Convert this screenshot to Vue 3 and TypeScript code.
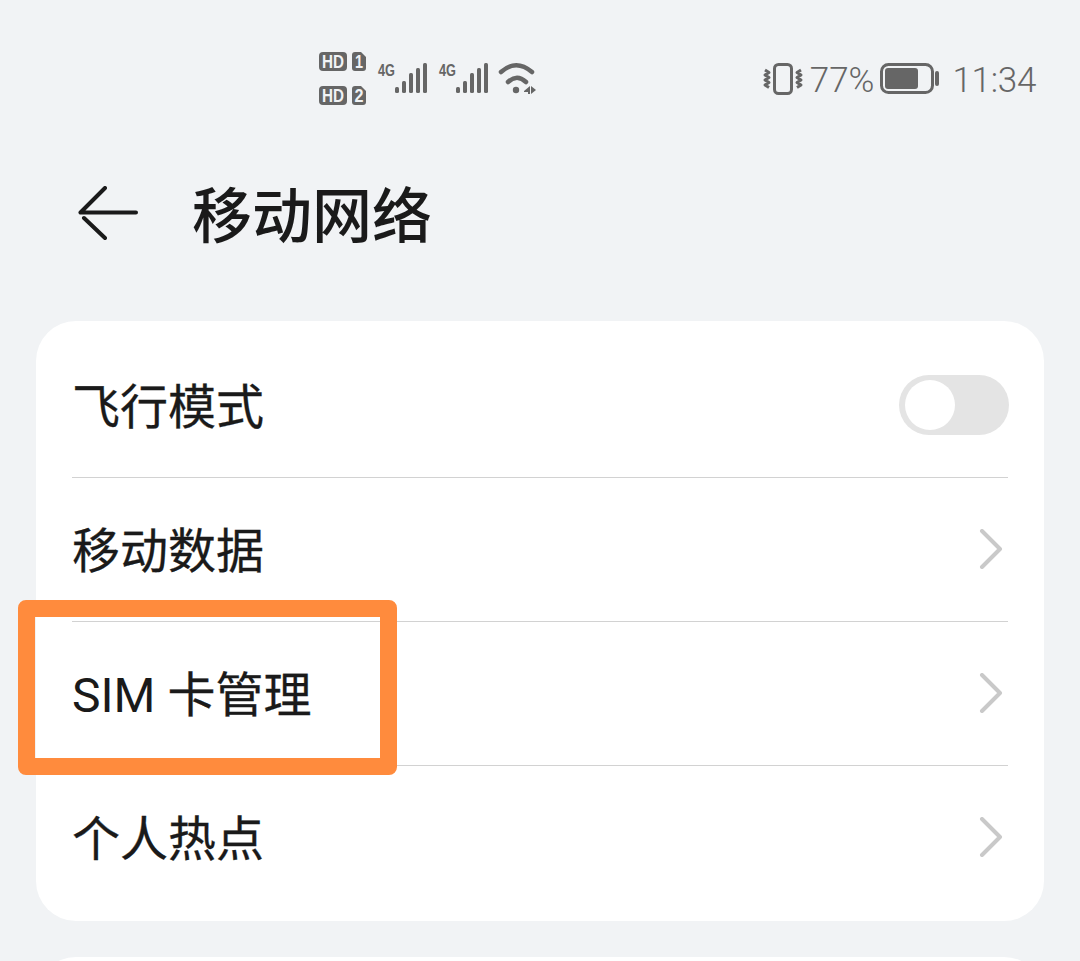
<script setup lang="ts">
const rows: { label: string; latin?: string; toggle?: boolean }[] = [
  { label: '飞行模式', toggle: true },
  { label: '移动数据' },
  { latin: 'SIM ', label: '卡管理' },
  { label: '个人热点' },
]
const bars = [
  { x: 0, y: 24, h: 6 },
  { x: 7, y: 18, h: 12 },
  { x: 14, y: 10, h: 20 },
  { x: 21, y: 5, h: 25 },
  { x: 28, y: 0, h: 30 },
]
</script>

<template>
  <div class="page">
    <div class="status">
      <svg class="sim" width="48" height="54" viewBox="0 0 48 54">
        <rect x="0" y="0" width="28" height="19" rx="4" fill="#666" />
        <text x="14" y="16" class="badge" text-anchor="middle" textLength="22" lengthAdjust="spacingAndGlyphs">HD</text>
        <path d="M33 3a3 3 0 0 1 3-3h6l5 5v11a3 3 0 0 1-3 3h-8a3 3 0 0 1-3-3z" fill="#666" />
        <text x="40" y="16" class="badge" text-anchor="middle" textLength="8" lengthAdjust="spacingAndGlyphs">1</text>
        <rect x="0" y="34" width="28" height="19" rx="4" fill="#666" />
        <text x="14" y="50" class="badge" text-anchor="middle" textLength="22" lengthAdjust="spacingAndGlyphs">HD</text>
        <path d="M33 37a3 3 0 0 1 3-3h6l5 5v11a3 3 0 0 1-3 3h-8a3 3 0 0 1-3-3z" fill="#666" />
        <text x="40" y="50" class="badge" text-anchor="middle" textLength="9" lengthAdjust="spacingAndGlyphs">2</text>
      </svg>
      <svg v-for="n in 2" :key="n" class="signal" width="50" height="32" viewBox="0 0 50 32">
        <text x="0" y="13" class="net" textLength="17" lengthAdjust="spacingAndGlyphs">4G</text>
        <rect v-for="b in bars" :key="b.x" :x="17 + b.x" :y="b.y" width="4" :height="b.h" rx="1.5" fill="#666" />
      </svg>
      <svg class="wifi" width="38" height="34" viewBox="0 0 38 34">
        <path d="M3 10Q18 -3.500 34 10" fill="none" stroke="#666" stroke-width="4.500" stroke-linecap="round" />
        <path d="M10 20Q19 11.500 28 20" fill="none" stroke="#666" stroke-width="4.500" stroke-linecap="round" />
        <circle cx="18" cy="28" r="3.200" fill="#666" />
        <path d="M26 29L32 24V32H30V30H26zM33 24L38 28L33 32z" fill="#666" />
      </svg>
      <div class="right">
        <svg class="vibrate" width="40" height="32" viewBox="0 0 40 32">
          <rect x="11.500" y="1.500" width="17" height="29" rx="4" fill="none" stroke="#666" stroke-width="3" />
          <path d="M2 7l4 2.500-4 2.500 4 2.500-4 2.500 4 2.500-4 2.500 4 2.500" fill="none" stroke="#666" stroke-width="3" stroke-linejoin="round" />
          <path d="M38 7l-4 2.500 4 2.500-4 2.500 4 2.500-4 2.500 4 2.500-4 2.500" fill="none" stroke="#666" stroke-width="3" stroke-linejoin="round" />
        </svg>
        <span class="pct">77%</span>
        <svg class="battery" width="60" height="32" viewBox="0 0 60 32">
          <rect x="1.500" y="1.500" width="51" height="28" rx="7" fill="none" stroke="#666" stroke-width="3" />
          <rect x="5" y="5" width="33" height="21" rx="3" fill="#666" />
          <rect x="55" y="8" width="4" height="15" rx="2" fill="#666" />
        </svg>
        <span class="time">11:34</span>
      </div>
    </div>

    <header class="head">
      <svg class="back" width="62" height="58" viewBox="0 0 62 58">
        <path d="M28 2L3.500 26.500H59M7 32L28 52" fill="none" stroke="#1a1a1a" stroke-width="4" stroke-linecap="round" stroke-linejoin="round" />
      </svg>
      <h1 class="title">移动网络</h1>
    </header>

    <section class="card">
      <div v-for="row in rows" :key="row.label" class="row">
        <span class="label"><span v-if="row.latin" class="latin">{{ row.latin }}</span>{{ row.label }}</span>
        <span v-if="row.toggle" class="switch"><span class="knob"></span></span>
        <svg v-else class="chev" width="24" height="40" viewBox="0 0 24 40">
          <path d="M3 2L21 20L3 38" fill="none" stroke="#c9c9c9" stroke-width="4" stroke-linecap="round" stroke-linejoin="round" />
        </svg>
      </div>
    </section>

    <section class="card next"></section>

    <div class="mark"></div>
  </div>
</template>

<style>
html, body { margin: 0; background: #f1f3f5; }
</style>

<style scoped>
.page {
  position: relative;
  width: 1080px;
  height: 961px;
  overflow: hidden;
  background: #f1f3f5;
  font-family: Roboto, "Noto Sans CJK SC", sans-serif;
  color: #1a1a1a;
}
.status {
  height: 160px;
  display: flex;
  align-items: center;
  padding: 0 44px 0 319px;
  box-sizing: border-box;
}
.status svg { overflow: visible; }
.sim { margin-top: -2px; }
.signal { margin-left: 11px; margin-top: -2px; }
.wifi { margin-left: 9px; margin-top: -2px; }
.badge {
  font: 700 18px "Liberation Sans", sans-serif;
  fill: #f1f3f5;
}
.net {
  font: 700 17px "Liberation Sans", sans-serif;
  fill: #666;
}
.right {
  margin-left: auto;
  display: flex;
  align-items: center;
  font-size: 35px;
  font-weight: 300;
  color: #666;
}
.vibrate { margin-top: -2px; }
.pct { margin-left: 7px; }
.battery { margin-left: 6px; margin-top: -2px; }
.time { margin-left: 12px; letter-spacing: -0.3px; }
.head {
  height: 110px;
  display: flex;
  align-items: center;
  padding-left: 77px;
  margin-bottom: 51px;
}
.back { flex: none; }
.title {
  margin: 0 0 0 53px;
  padding-bottom: 7px;
  font-size: 60px;
  font-weight: 500;
  line-height: 1;
  font-family: "Noto Sans CJK SC", sans-serif;
}
.card {
  margin: 0 36px;
  padding: 13px 36px 11px;
  background: #fff;
  border-radius: 40px;
}
.row {
  height: 144px;
  box-sizing: border-box;
  display: flex;
  align-items: center;
  justify-content: space-between;
  border-bottom: 1px solid #d2d2d2;
}
.row:last-child { border-bottom: 0; }
.label {
  padding-top: 4px;
  font-size: 48px;
  font-weight: 400;
  -webkit-text-stroke: 0.3px #1a1a1a;
  line-height: 1;
}
.latin { -webkit-text-stroke: 0; }
.switch {
  width: 110px;
  height: 60px;
  margin-right: -1px;
  margin-top: -2px;
  border-radius: 30px;
  background: #e4e4e4;
  display: flex;
  align-items: center;
  padding-left: 6px;
  box-sizing: border-box;
}
.knob {
  width: 50px;
  height: 50px;
  border-radius: 50%;
  background: #fff;
}
.chev { margin-right: 5px; margin-top: -2px; }
.next {
  margin-top: 36px;
  height: 100px;
}
.mark {
  position: absolute;
  left: 18px;
  top: 600px;
  width: 379px;
  height: 175px;
  box-sizing: border-box;
  border: 17px solid #ff8b3d;
  border-radius: 8px;
}
</style>
